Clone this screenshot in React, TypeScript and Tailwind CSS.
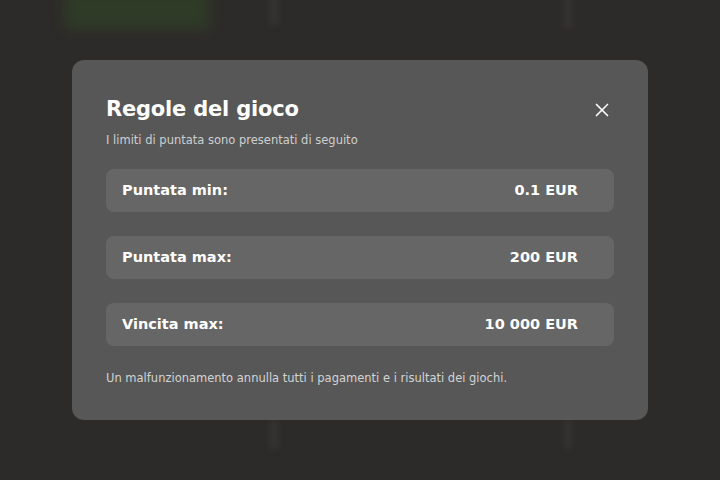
import { X } from 'lucide-react';

const limits = [
  { label: 'Puntata min:', value: '0.1 EUR' },
  { label: 'Puntata max:', value: '200 EUR' },
  { label: 'Vincita max:', value: '10 000 EUR' },
];

export default function App() {
  return (
    <div
      className="relative w-[720px] h-[480px] overflow-hidden bg-[#2d2b29] flex items-center justify-center"
      style={{ fontFamily: '"DejaVu Sans", "Noto Sans", sans-serif' }}
    >
      {/* blurred game backdrop */}
      <div className="absolute left-[64px] -top-[10px] w-[146px] h-[40px] rounded-md bg-[#2f3a27] blur-[6px]" />
      <div className="absolute left-[270px] -top-[4px] w-[8px] h-[28px] bg-[#363533] blur-[3px]" />
      <div className="absolute left-[564px] -top-[4px] w-[8px] h-[32px] bg-[#363533] blur-[3px]" />
      <div className="absolute left-[270px] top-[420px] w-[8px] h-[28px] bg-[#363533] blur-[3px]" />
      <div className="absolute left-[564px] top-[420px] w-[8px] h-[28px] bg-[#363533] blur-[3px]" />

      <div className="relative w-[576px] h-[360px] rounded-[12px] bg-[#575757] px-[34px] pt-[34px]">
        <div className="flex items-start justify-between">
          <h2 className="text-[21px] font-bold text-white leading-[30px] tracking-[-0.2px]">Regole del gioco</h2>
          <button className="mt-[5px] mr-[1px] text-white">
            <X className="w-[22px] h-[22px]" strokeWidth={1.8} />
          </button>
        </div>
        <p className="mt-[8px] text-[11.5px] text-[#cfcfcf] leading-[16px]">
          I limiti di puntata sono presentati di seguito
        </p>

        <div className="mt-[21px] flex flex-col gap-[24px]">
          {limits.map((l) => (
            <div
              key={l.label}
              className="h-[43px] rounded-[8px] bg-[#666666] pl-[16px] pr-[36px] flex items-center justify-between text-white font-bold text-[14.5px]"
            >
              <span>{l.label}</span>
              <span>{l.value}</span>
            </div>
          ))}
        </div>

        <p className="mt-[24px] text-[11.5px] text-[#d4d4d4] leading-[16px]">
          Un malfunzionamento annulla tutti i pagamenti e i risultati dei giochi.
        </p>
      </div>
    </div>
  );
}
